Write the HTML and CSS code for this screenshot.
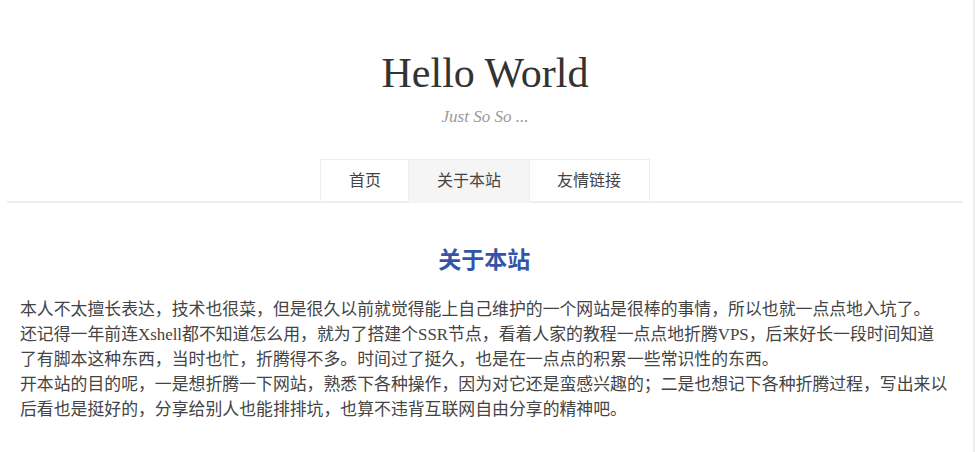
FILE: index.html
```html
<!DOCTYPE html>
<html lang="zh-CN">
<head>
<meta charset="utf-8">
<title>关于本站 | Hello World</title>
<link rel="stylesheet" href="styles.css">
</head>
<body>
<header class="site-header">
  <h1 class="site-title">Hello World</h1>
  <p class="site-desc">Just So So ...</p>
  <nav class="nav">
    <a class="nav-item" href="#">首页</a>
    <a class="nav-item active" href="#">关于本站</a>
    <a class="nav-item" href="#">友情链接</a>
  </nav>
</header>
<main class="content">
  <h2 class="page-title">关于本站</h2>
  <p class="page-text">本人不太擅长表达，技术也很菜，但是很久以前就觉得能上自己维护的一个网站是很棒的事情，所以也就一点点地入坑了。<br>还记得一年前连Xshell都不知道怎么用，就为了搭建个SSR节点，看着人家的教程一点点地折腾VPS，后来好长一段时间知道了有脚本这种东西，当时也忙，折腾得不多。时间过了挺久，也是在一点点的积累一些常识性的东西。<br>开本站的目的呢，一是想折腾一下网站，熟悉下各种操作，因为对它还是蛮感兴趣的；二是也想记下各种折腾过程，写出来以后看也是挺好的，分享给别人也能排排坑，也算不违背互联网自由分享的精神吧。</p>
</main>
</body>
</html>
```

FILE: styles.css
```css
html {
  border-right: 2px solid #eee;
  min-height: 100%;
  box-sizing: border-box;
  background: #fff;
}
body {
  margin: 0;
  font-family: "Liberation Serif", "Noto Sans CJK SC", serif;
  color: #444;
}
.site-header {
  margin: 0 10px 0 7px;
  padding-top: 49px;
  border-bottom: 2px solid #eee;
  text-align: center;
}
.site-title {
  margin: 0;
  font-family: "Liberation Serif", serif;
  font-weight: normal;
  font-size: 42px;
  line-height: 48px;
  color: #333;
}
.site-desc {
  margin: 9px 0 0;
  font-family: "Liberation Serif", serif;
  font-style: italic;
  font-size: 17px;
  line-height: 22px;
  color: #999;
}
.nav {
  display: flex;
  justify-content: center;
  margin-top: 31px;
  margin-bottom: -2px;
}
.nav-item {
  display: block;
  padding: 0 27.5px;
  height: 43px;
  line-height: 38px;
  border: 1px solid #eee;
  border-bottom: none;
  margin-left: -1px;
  font-family: "Noto Sans CJK SC", sans-serif;
  font-size: 16px;
  color: #444;
  text-decoration: none;
}
.nav-item:first-child { margin-left: 0; }
.nav-item.active {
  background: #f5f5f5;
}
.content {
  padding: 0 24.5px 0 20px;
}
.page-title {
  margin: 39px 0 0;
  text-align: center;
  font-family: "Noto Sans CJK SC", sans-serif;
  font-size: 23px;
  line-height: 32px;
  font-weight: bold;
  color: #3454a8;
}
.page-text {
  margin: 23px 0 0;
  font-size: 16.87px;
  line-height: 25px;
  color: #444;
}
```
